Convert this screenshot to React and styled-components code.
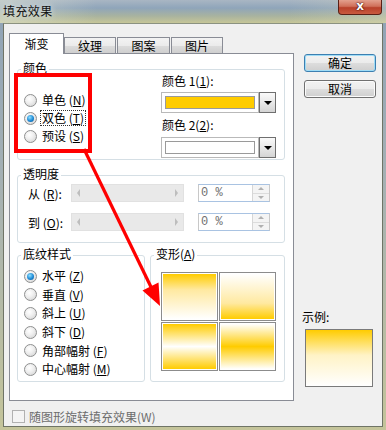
import React from 'react'
import styled, { createGlobalStyle } from 'styled-components'

const Global = createGlobalStyle`
    html, body { margin: 0; padding: 0; background: #fff; }
    body { font-family: "Noto Sans CJK SC", "Liberation Sans", sans-serif; font-size: 12px; color: #000; }
`

const YELLOW = '#ffcc00'

const Window = styled.div`
    position: relative;
    width: 386px;
    height: 430px;
    display: flex;
    flex-direction: column;
    background: linear-gradient(180deg, #8ea2b6 0%, #a4b0b4 40%, #c4c49a 100%);
    overflow: hidden;
`

const TitleBar = styled.div`
    height: 23px;
    flex: none;
    display: flex;
    align-items: flex-start;
    justify-content: space-between;
    padding-left: 3px;
    background:
        linear-gradient(90deg, rgba(220,225,210,0.55) 0%, rgba(255,255,255,0) 25%, rgba(255,255,255,0) 75%, rgba(220,220,190,0.35) 100%),
        linear-gradient(180deg, #a9b6c3 0%, #8fa5ba 35%, #a9b39f 70%, #c6c698 100%);
`

const Title = styled.div`
    font-size: 12px;
    line-height: 22px;
    letter-spacing: 0.4px;
    color: #111;
    text-shadow: 0 0 6px rgba(255,255,255,0.8);
`

const CloseBtn = styled.div`
    width: 44px;
    height: 15px;
    margin-right: 4px;
    box-sizing: border-box;
    border: 1px solid #5a2016;
    border-top: none;
    border-radius: 0 0 4px 4px;
    background: linear-gradient(180deg, #e3a08e 0%, #d0705a 45%, #b8402a 55%, #c95a40 100%);
    color: #fff;
    font: bold 12px/13px "DejaVu Sans", sans-serif;
    text-align: center;
    text-shadow: 0 0 2px #3a0a00, 0 0 1px #3a0a00;
`

const Body = styled.div`
    flex: 1;
    margin: 0 3px 3px 3px;
    background: #f0f0f0;
    border: 1px solid #6f7466;
    border-top-color: #8b9280;
    display: flex;
    padding: 9px 0 0 5px;
    box-sizing: border-box;
`

const LeftCol = styled.div`
    width: 285px;
    display: flex;
    flex-direction: column;
`

const TabBar = styled.div`
    height: 21px;
    display: flex;
    align-items: flex-end;
    position: relative;
    z-index: 1;
    margin-bottom: -1px;
`

const Tab = styled.div`
    box-sizing: border-box;
    width: ${p => p.$w}px;
    height: ${p => (p.$active ? 21 : 17)}px;
    margin-right: ${p => (p.$active ? 0 : 1)}px;
    border: 1px solid #898c95;
    border-bottom: ${p => (p.$active ? 'none' : '1px solid #898c95')};
    background: ${p => (p.$active ? '#fff' : 'linear-gradient(180deg, #f3f3f3 0%, #ebebeb 50%, #dcdcdc 51%, #cfcfcf 100%)')};
    text-align: center;
    font-size: 12px;
    line-height: ${p => (p.$active ? 19 : 16)}px;
`

const Panel = styled.div`
    box-sizing: border-box;
    height: 348px;
    background: #fff;
    border: 1px solid #898c95;
    padding: 15px 0 0 7px;
    display: flex;
    flex-direction: column;
`

const Group = styled.div`
    position: relative;
    box-sizing: border-box;
    width: ${p => p.$w || 268}px;
    height: ${p => p.$h}px;
    border: 1px solid #d5dfe5;
    border-radius: 3px;
    margin-bottom: ${p => p.$mb || 0}px;
`

const GroupTitle = styled.div`
    position: absolute;
    top: -9px;
    left: 3px;
    padding: 0 2px;
    background: #fff;
    font-size: 12px;
    line-height: 14px;
`

const ColorGrid = styled.div`
    display: grid;
    grid-template-columns: 137px 115px;
    padding: 4px 0 0 6px;
`

const RadioList = styled.div`
    padding-top: ${p => p.$pt}px;
    display: flex;
    flex-direction: column;
`

const RadioRow = styled.div`
    height: ${p => p.$h || 18}px;
    display: flex;
    align-items: center;
    gap: 4px;
    font-size: 12px;
`

const RadioDot = styled.span`
    width: 13px;
    height: 13px;
    box-sizing: border-box;
    border-radius: 50%;
    border: 1px solid #8e8f8f;
    background: radial-gradient(circle at 40% 35%, #ffffff 0%, #f0f0f0 40%, #cfcfcf 100%);
    display: flex;
    align-items: center;
    justify-content: center;
    flex: none;
    &::after {
        content: '';
        display: ${p => (p.$on ? 'block' : 'none')};
        width: 7px;
        height: 7px;
        border-radius: 50%;
        background: radial-gradient(circle at 40% 35%, #8fe0ff 0%, #1e8ad6 55%, #0b4f8a 100%);
    }
`

const RadioText = styled.span`
    line-height: 14px;
    padding: 0 1px;
    outline: ${p => (p.$focus ? '1px dotted #333' : 'none')};
    white-space: nowrap;
`

const Key = styled.u`
    text-decoration: underline;
    text-underline-offset: 1px;
`

const ColorSide = styled.div`
    display: flex;
    flex-direction: column;
`

const FieldLabel = styled.div`
    font-size: 12px;
    line-height: 14px;
    margin: ${p => p.$m};
    white-space: nowrap;
`

const Combo = styled.div`
    display: flex;
    height: 21px;
    width: 115px;
`

const ComboField = styled.div`
    flex: 1;
    box-sizing: border-box;
    border: 1px solid #b9b9b9;
    background: #fff;
    padding: 3px;
    display: flex;
`

const Swatch = styled.div`
    flex: 1;
    border: 1px solid #9a9a9a;
    background: ${p => p.$c};
`

const DropBtn = styled.div`
    width: 17px;
    box-sizing: border-box;
    border: 1px solid #6f6f6f;
    background: linear-gradient(180deg, #fafafa 0%, #e8e8e8 50%, #d4d4d4 100%);
    display: flex;
    align-items: center;
    justify-content: center;
    &::after {
        content: '';
        border-left: 4px solid transparent;
        border-right: 4px solid transparent;
        border-top: 4px solid #000;
    }
`

const SliderRow = styled.div`
    display: flex;
    align-items: center;
    height: 18px;
    margin-top: ${p => p.$mt}px;
`

const RowLabel = styled.div`
    width: 53px;
    padding-left: 10px;
    box-sizing: border-box;
    font-size: 12px;
    white-space: nowrap;
`

const Track = styled.div`
    width: 113px;
    height: 18px;
    box-sizing: border-box;
    background: #e9e9e9;
    border: 1px solid #e1e1e1;
    display: flex;
    justify-content: space-between;
    align-items: center;
    padding: 0 5px;
    &::before, &::after {
        content: '';
        border-top: 4px solid transparent;
        border-bottom: 4px solid transparent;
    }
    &::before { border-right: 3px solid #bdbdbd; }
    &::after { border-left: 3px solid #bdbdbd; }
`

const Spin = styled.div`
    width: 72px;
    height: 18px;
    margin-left: 14px;
    box-sizing: border-box;
    display: flex;
    border: 1px solid #c8c8c8;
    border-top-color: #a9c3e2;
    border-bottom-color: #a9c3e2;
    background: #fff;
`

const SpinText = styled.div`
    flex: 1;
    font: 12px/16px "Liberation Mono", "DejaVu Sans Mono", monospace;
    color: #707070;
    padding-left: 2px;
    border-right: 1px solid #d6d6d6;
`

const SpinBtns = styled.div`
    width: 16px;
    display: flex;
    flex-direction: column;
`

const SpinHalf = styled.div`
    flex: 1;
    display: flex;
    align-items: center;
    justify-content: center;
    background: #f4f4f4;
    & + & { border-top: 1px solid #dcdcdc; }
    &::after {
        content: '';
        border-left: 3px solid transparent;
        border-right: 3px solid transparent;
        ${p => (p.$up ? 'border-bottom: 3px solid #b0b0b0;' : 'border-top: 3px solid #b0b0b0;')}
    }
`

const BottomRow = styled.div`
    display: flex;
    gap: 5px;
`

const ShapeGrid = styled.div`
    display: grid;
    grid-template-columns: 57px 57px;
    grid-template-rows: 49px 49px;
    gap: 1px;
    margin: 16px 0 0 10px;
`

const ShapeCell = styled.div`
    box-sizing: border-box;
    border: 1px solid #8c8c8c;
    padding: 1px;
    background: #fff;
    &::after {
        content: '';
        display: block;
        height: 100%;
        background: ${p => p.$bg};
    }
`

const RightCol = styled.div`
    width: 72px;
    margin-left: 10px;
    display: flex;
    flex-direction: column;
`

const Button = styled.div`
    height: 18px;
    box-sizing: border-box;
    border: 1px solid ${p => (p.$def ? '#3c7fb1' : '#707070')};
    box-shadow: ${p => (p.$def ? 'inset 0 0 0 1px #9fdcf6' : 'inset 0 0 0 1px #fbfbfb')};
    border-radius: 3px;
    background: linear-gradient(180deg, #f2f2f2 0%, #ebebeb 50%, #dddddd 51%, #cfcfcf 100%);
    text-align: center;
    font-size: 12px;
    line-height: 16px;
    margin-top: ${p => p.$mt}px;
`

const SampleLabel = styled.div`
    margin: 212px 0 0 -2px;
    font-size: 12px;
    line-height: 14px;
`

const SampleBox = styled.div`
    margin: 5px 0 0 1px;
    width: 68px;
    height: 58px;
    box-sizing: border-box;
    border: 1px solid #7a7a7a;
    background: linear-gradient(180deg, ${YELLOW} 0%, #fff3c6 45%, #ffffff 100%);
`

const CheckRow = styled.div`
    display: flex;
    align-items: center;
    gap: 4px;
    margin: 7px 0 0 3px;
    color: #6d6d6d;
    font-size: 12px;
`

const CheckBox = styled.span`
    width: 13px;
    height: 13px;
    box-sizing: border-box;
    border: 1px solid #b1b1b1;
    background: #f4f4f4;
`

const Overlay = styled.svg`
    position: absolute;
    left: 0;
    top: 0;
    pointer-events: none;
`

const Highlight = styled.div`
    position: absolute;
    left: 14px;
    top: 73px;
    width: 78px;
    height: 80px;
    box-sizing: border-box;
    border: 4px solid #ff0000;
    pointer-events: none;
`

function Radio({ on, focus, children, h }) {
    return (
        <RadioRow $h={h}>
            <RadioDot $on={on} />
            <RadioText $focus={focus}>{children}</RadioText>
        </RadioRow>
    )
}

function ColorCombo({ color }) {
    return (
        <Combo>
            <ComboField><Swatch $c={color} /></ComboField>
            <DropBtn />
        </Combo>
    )
}

function TransparencyRow({ label, k, mt }) {
    return (
        <SliderRow $mt={mt}>
            <RowLabel>{label} (<Key>{k}</Key>):</RowLabel>
            <Track />
            <Spin>
                <SpinText>0 %</SpinText>
                <SpinBtns>
                    <SpinHalf $up />
                    <SpinHalf />
                </SpinBtns>
            </Spin>
        </SliderRow>
    )
}

const shapes = [
    `linear-gradient(180deg, ${YELLOW} 0%, #ffe9a0 35%, #ffffff 100%)`,
    `linear-gradient(180deg, #ffffff 0%, #ffe9a0 65%, ${YELLOW} 100%)`,
    `linear-gradient(180deg, ${YELLOW} 0%, #ffffff 50%, ${YELLOW} 100%)`,
    `linear-gradient(180deg, #ffffff 0%, ${YELLOW} 50%, #ffffff 100%)`,
]

export default function App() {
    return (
        <>
            <Global />
            <Window>
                <TitleBar>
                    <Title>填充效果</Title>
                    <CloseBtn>x</CloseBtn>
                </TitleBar>
                <Body>
                    <LeftCol>
                        <TabBar>
                            <Tab $active $w={55}>渐变</Tab>
                            <Tab $w={52}>纹理</Tab>
                            <Tab $w={53}>图案</Tab>
                            <Tab $w={52}>图片</Tab>
                        </TabBar>
                        <Panel>
                            <Group $h={91} $mb={15}>
                                <GroupTitle>颜色</GroupTitle>
                                <ColorGrid>
                                    <RadioList $pt={17}>
                                        <Radio>单色 (<Key>N</Key>)</Radio>
                                        <Radio on focus>双色 (<Key>T</Key>)</Radio>
                                        <Radio>预设 (<Key>S</Key>)</Radio>
                                    </RadioList>
                                    <ColorSide>
                                        <FieldLabel $m="0 0 4px 1px">颜色 1(<Key>1</Key>):</FieldLabel>
                                        <ColorCombo color={YELLOW} />
                                        <FieldLabel $m="5px 0 5px 1px">颜色 2(<Key>2</Key>):</FieldLabel>
                                        <ColorCombo color="#ffffff" />
                                    </ColorSide>
                                </ColorGrid>
                            </Group>
                            <Group $h={68} $mb={12}>
                                <GroupTitle>透明度</GroupTitle>
                                <TransparencyRow label="从" k="R" mt={8} />
                                <TransparencyRow label="到" k="O" mt={11} />
                            </Group>
                            <BottomRow>
                                <Group $w={128} $h={127}>
                                    <GroupTitle>底纹样式</GroupTitle>
                                    <RadioList $pt={11} style={{ paddingLeft: 6 }}>
                                        <Radio on h={18.6}>水平 (<Key>Z</Key>)</Radio>
                                        <Radio h={18.6}>垂直 (<Key>V</Key>)</Radio>
                                        <Radio h={18.6}>斜上 (<Key>U</Key>)</Radio>
                                        <Radio h={18.6}>斜下 (<Key>D</Key>)</Radio>
                                        <Radio h={18.6}>角部幅射 (<Key>F</Key>)</Radio>
                                        <Radio h={18.6}>中心幅射 (<Key>M</Key>)</Radio>
                                    </RadioList>
                                </Group>
                                <Group $w={135} $h={127}>
                                    <GroupTitle>变形(<Key>A</Key>)</GroupTitle>
                                    <ShapeGrid>
                                        {shapes.map((bg, i) => <ShapeCell key={i} $bg={bg} />)}
                                    </ShapeGrid>
                                </Group>
                            </BottomRow>
                        </Panel>
                        <CheckRow>
                            <CheckBox />
                            <span>随图形旋转填充效果(W)</span>
                        </CheckRow>
                    </LeftCol>
                    <RightCol>
                        <Button $def $mt={21}>确定</Button>
                        <Button $mt={8}>取消</Button>
                        <SampleLabel>示例:</SampleLabel>
                        <SampleBox />
                    </RightCol>
                </Body>
                <Highlight />
                <Overlay width="386" height="430" viewBox="0 0 386 430">
                    <line x1="84" y1="149" x2="151" y2="287" stroke="#ff0000" strokeWidth="3.2" />
                    <polygon points="160,306 142.5,290.5 158.5,282.5" fill="#ff0000" />
                </Overlay>
            </Window>
        </>
    )
}
